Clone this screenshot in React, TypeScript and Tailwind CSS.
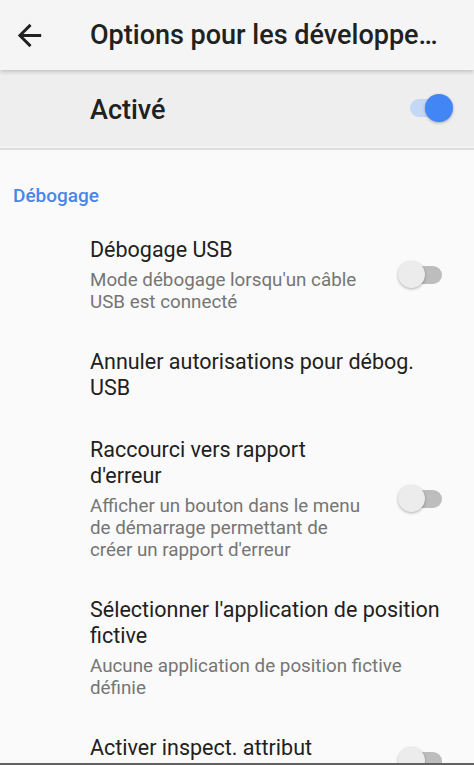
import React from "react";

type Item = { title: string; summary?: string; toggle?: boolean };

const items: Item[] = [
  { title: "Débogage USB", summary: "Mode débogage lorsqu'un câble USB est connecté", toggle: true },
  { title: "Annuler autorisations pour débog. USB" },
  {
    title: "Raccourci vers rapport d'erreur",
    summary: "Afficher un bouton dans le menu de démarrage permettant de créer un rapport d'erreur",
    toggle: true,
  },
  { title: "Sélectionner l'application de position fictive", summary: "Aucune application de position fictive définie" },
  { title: "Activer inspect. attribut affichage", toggle: true },
];

function SwitchOff() {
  return (
    <div className="relative w-[44px] h-[28px] shrink-0">
      <div className="absolute left-[7px] right-0 top-[5px] h-[18px] rounded-full bg-[#bdbdbd]" />
      <div className="absolute left-0 top-0 w-[27px] h-[27px] rounded-full bg-[#ececec] shadow-[0_1px_3px_rgba(0,0,0,0.3)]" />
    </div>
  );
}

function SwitchOn() {
  return (
    <div className="relative w-[43px] h-[28px] shrink-0">
      <div className="absolute left-0 right-[5px] top-[5px] h-[18px] rounded-full bg-[#c5d7f6]" />
      <div className="absolute right-0 top-0 w-[28px] h-[28px] rounded-full bg-[#4285f4] shadow-[0_1px_3px_rgba(0,0,0,0.3)]" />
    </div>
  );
}

export default function App() {
  return (
    <div className="h-[765px] w-[474px] flex flex-col overflow-hidden bg-[#fafafa] font-['Roboto',sans-serif]">
      <header className="relative z-10 h-[70px] shrink-0 flex items-center bg-[#f5f5f5] shadow-[0_2px_4px_rgba(0,0,0,0.18)]">
        <div className="w-[90px] shrink-0 pl-[12px]">
          <svg width="35" height="35" viewBox="0 0 24 24" fill="#212121">
            <path d="M20 11H7.83l5.59-5.59L12 4l-8 8 8 8 1.41-1.41L7.83 13H20v-2z" />
          </svg>
        </div>
        <h1 className="text-[27px] leading-[70px] font-medium text-[#212121] whitespace-nowrap">
          Options pour les développe…
        </h1>
      </header>

      <div className="h-[76px] shrink-0 flex items-center justify-between pl-[90px] pr-[21px] bg-[#eeeeee]">
        <span className="text-[27px] font-medium text-[#212121] pt-[4px]">Activé</span>
        <SwitchOn />
      </div>
      <div className="h-[4px] shrink-0 border-b-2 border-[#dedede] bg-[#f3f3f3]" />

      <div className="flex-1 overflow-hidden">
        <div className="pt-[33px] mb-[11px] pl-[13px] text-[19px] leading-[25px] font-medium text-[#4a86e8]">
          Débogage
        </div>
        {items.map((it, i) => (
          <div
            key={i}
            className={
              it.toggle
                ? "flex items-center justify-between pl-[90px] pr-[32px] py-[18px]"
                : "flex items-center pl-[90px] pr-[28px] py-[18px]"
            }
          >
            <div className={it.toggle ? "flex-1 pr-[32px]" : "flex-1"}>
              <div className="text-[21.5px] leading-[26px] text-[#212121]">{it.title}</div>
              {it.summary && (
                <div className="mt-[6px] text-[18.8px] leading-[22px] text-[#757575]">{it.summary}</div>
              )}
            </div>
            {it.toggle && <SwitchOff />}
          </div>
        ))}
      </div>
      <div className="h-[2px] shrink-0 bg-[#616161]" />
    </div>
  );
}
